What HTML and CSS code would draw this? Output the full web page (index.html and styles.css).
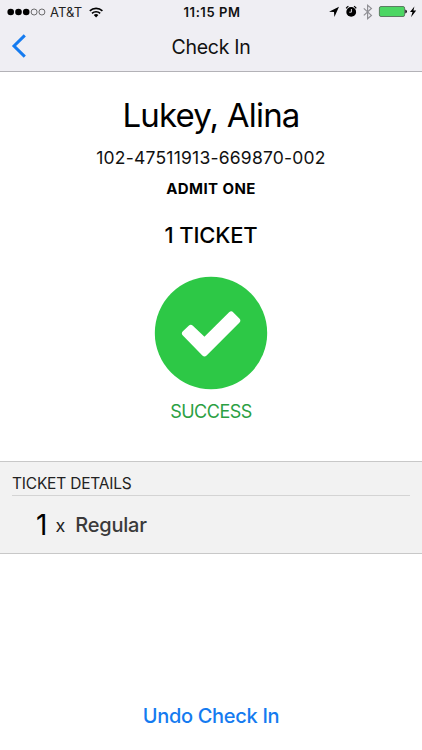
FILE: index.html
```html
<!DOCTYPE html>
<html lang="en">
<head>
<meta charset="utf-8">
<title>Check In</title>
<link rel="stylesheet" href="styles.css">
</head>
<body>
<div class="screen">
  <header class="header">
    <div class="status">
      <div class="status-left">
        <svg width="40" height="8" viewBox="0 0 40 8">
          <g fill="#000"><circle cx="3.7" cy="4" r="3.3"/><circle cx="11.5" cy="4" r="3.3"/><circle cx="19.2" cy="4" r="3.3"/></g>
          <g fill="none" stroke="#333" stroke-width=".7"><circle cx="27.1" cy="4" r="3"/><circle cx="34.9" cy="4" r="3"/></g>
        </svg>
        <span class="carrier">AT&amp;T</span>
        <svg class="wifi" width="15" height="11" viewBox="0 0 15 11">
          <g fill="none" stroke="#000" stroke-width="1.6"><path d="M.8 3.9a9.2 9.2 0 0 1 12.6 0"/><path d="M3 6.3a6 6 0 0 1 8.2 0"/></g>
          <path d="M4.8 8.1a3.4 3.4 0 0 1 4.6 0L7.1 10.5z"/>
        </svg>
      </div>
      <span class="time">11:15 PM</span>
      <div class="status-right">
        <svg width="94" height="20" viewBox="328 2 94 20">
          <path d="M339 6.8 329 11.8 334 12.1 334.4 17z"/>
          <g>
            <circle cx="351.2" cy="11.9" r="4.9"/>
            <path d="M346.2 8.4a6 6 0 0 1 2.2-2.1M354 6.3a6 6 0 0 1 2.2 2.1" fill="none" stroke="#000" stroke-width="1.3"/>
            <path d="M351.4 9v3.2h-2.1" fill="none" stroke="#efeef3" stroke-width=".9"/>
          </g>
          <path d="M363.8 8.4l7.6 7-3.8 3.2V5.2l3.8 3.2-7.6 7" fill="none" stroke="#8f8f94" stroke-width="1.2"/>
          <rect x="379.4" y="6.5" width="25.2" height="10" rx="1.6" fill="#4cd663" stroke="#55705a" stroke-width=".9"/>
          <path d="M405.3 9.5q1.6.4 1.6 2t-1.6 2z"/>
          <path d="M414.4 6.4 410 12h2.5L411 17.2l5.2-6.6h-2.8z"/>
        </svg>
      </div>
    </div>
    <div class="nav">
      <svg class="back" width="16" height="24" viewBox="0 0 16 24"><path d="M13.8 1.4 3 12l10.8 10.6" fill="none" stroke="#157bf0" stroke-width="3"/></svg>
      <h1 class="title">Check In</h1>
    </div>
  </header>
  <main class="guest">
    <div class="name">Lukey, Alina</div>
    <div class="code">102-47511913-669870-002</div>
    <div class="admit">ADMIT ONE</div>
    <div class="count">1 TICKET</div>
    <svg class="badge" width="114" height="114" viewBox="0 0 114 114">
      <circle cx="57" cy="57" r="56.2" fill="#2dc846"/>
      <path d="M31 57.5 36.8 51.8 50.5 65 77.2 38.5 83.2 44.7 50.5 77.3z" fill="#fff" stroke="#fff" stroke-width="6" stroke-linejoin="round"/>
    </svg>
    <div class="result">SUCCESS</div>
  </main>
  <section class="details">
    <h2 class="details-title">TICKET DETAILS</h2>
    <div class="row"><span class="qty">1</span><span class="times">x</span><span class="type">Regular</span></div>
  </section>
  <footer class="footer"><button class="undo">Undo Check In</button></footer>
</div>
</body>
</html>
```
FILE: styles.css
```css
* { box-sizing: border-box; }
body { margin: 0; font-family: Inter, sans-serif; color: #000; }
svg { display: block; }
h1, h2 { margin: 0; font-weight: 400; }
.screen { width: 422px; height: 750px; display: flex; flex-direction: column; background: #fff; overflow: hidden; }

.header { height: 72px; background: #efeef3; border-bottom: 1px solid #b3b2b7; }
.status { height: 24px; display: grid; grid-template-columns: 1fr auto 1fr; align-items: center; }
.status-left { display: flex; align-items: center; padding-left: 7px; }
.carrier { margin-left: 3px; font-size: 13px; line-height: 24px; letter-spacing: .1px; color: #222; }
.wifi { margin-left: 7px; }
.time { padding-left: 2px; font-size: 13px; font-weight: 600; line-height: 24px; letter-spacing: .55px; color: #111; }
.status-right { display: flex; justify-content: flex-end; }
.nav { height: 46px; display: grid; grid-template-columns: 1fr auto 1fr; align-items: center; }
.back { margin: -2px 0 0 11px; }
.title { margin-top: -1px; font-size: 19.5px; line-height: 46px; letter-spacing: -.3px; color: #111; }

.guest { height: 389px; display: flex; flex-direction: column; align-items: center; padding-top: 21px; }
.name { font-size: 33px; line-height: 44px; letter-spacing: -.8px; }
.code { margin-top: 9px; font-size: 17.5px; line-height: 24px; letter-spacing: .22px; color: #111; }
.admit { margin-top: 9px; font-size: 15px; font-weight: 700; line-height: 20px; letter-spacing: .4px; }
.count { margin-top: 21px; font-size: 22px; font-weight: 450; line-height: 30px; letter-spacing: -.15px; }
.badge { margin-top: 26px; }
.result { margin-top: 10px; font-size: 18px; line-height: 24px; letter-spacing: -.5px; color: #2ba043; }

.details { height: 93px; padding: 10px 12px 0; background: #f2f2f2; border-top: 1px solid #c8c8c8; border-bottom: 1px solid #c8c8c8; }
.details-title { height: 24px; font-size: 15.5px; line-height: 23px; letter-spacing: -.2px; color: #222; border-bottom: 1px solid #d4d4d4; }
.row { height: 57px; display: flex; align-items: center; padding: 1px 0 0 24px; line-height: 57px; }
.qty { font-size: 28px; }
.times { margin-left: 8px; font-size: 18px; color: #222; }
.type { margin-left: 10px; font-size: 20px; font-weight: 450; letter-spacing: -.2px; color: #3a3a3a; }

.footer { flex: 1; display: flex; justify-content: center; align-items: flex-end; padding-bottom: 19px; }
.undo { padding: 0; border: 0; background: none; font: 450 20px/30px Inter, sans-serif; letter-spacing: -.3px; color: #157bf0; }
```
